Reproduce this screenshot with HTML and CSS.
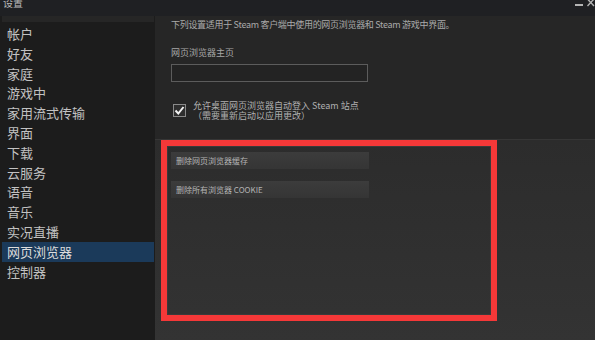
FILE: index.html
```html
<!DOCTYPE html>
<html lang="zh-CN">
<head>
<meta charset="utf-8">
<title>设置</title>
<link rel="stylesheet" href="styles.css">
</head>
<body>
<div class="window">
  <div class="titlebar">
    <span class="title">设置</span>
    <div class="controls">
      <svg class="ctl" width="10" height="8" viewBox="0 0 10 8"><rect x="1" y="4" width="8" height="2" fill="#b4b4b4"/></svg>
      <svg class="ctl" width="8" height="8" viewBox="0 0 8 8"><path d="M0.5 -1 L7 6 M7 -1 L0.5 6" stroke="#b4b4b4" stroke-width="1.4" fill="none"/></svg>
    </div>
  </div>
  <div class="main">
    <nav class="sidebar">
      <div class="strip"></div>
      <ul class="menu">
        <li class="item">帐户</li>
        <li class="item">好友</li>
        <li class="item">家庭</li>
        <li class="item">游戏中</li>
        <li class="item">家用流式传输</li>
        <li class="item">界面</li>
        <li class="item">下载</li>
        <li class="item">云服务</li>
        <li class="item">语音</li>
        <li class="item">音乐</li>
        <li class="item">实况直播</li>
        <li class="item active">网页浏览器</li>
        <li class="item">控制器</li>
      </ul>
    </nav>
    <section class="content">
      <div class="upper">
        <p class="intro">下列设置适用于 Steam 客户端中使用的网页浏览器和 Steam 游戏中界面。</p>
        <label class="field-label">网页浏览器主页</label>
        <div class="input"></div>
        <div class="check-row">
          <span class="checkbox">
            <svg width="11" height="11" viewBox="0 0 11 11"><path d="M1.5 5.5 L4.3 8.5 L9.5 2" stroke="#f2f2f2" stroke-width="2" fill="none"/></svg>
          </span>
          <div class="check-text">
            <div class="line">允许桌面网页浏览器自动登入 Steam 站点</div>
            <div class="line">（需要重新启动以应用更改）</div>
          </div>
        </div>
      </div>
      <div class="lower">
        <div class="highlight-box">
          <div class="btn">删除网页浏览器缓存</div>
          <div class="btn">删除所有浏览器 COOKIE</div>
        </div>
      </div>
    </section>
  </div>
</div>
</body>
</html>
```

FILE: styles.css
```css
* { box-sizing: border-box; }
html, body {
  margin: 0;
  padding: 0;
  width: 595px;
  height: 340px;
  overflow: hidden;
  background: #1c1c1c;
  font-family: "Noto Sans CJK SC", "Noto Sans", "Liberation Sans", sans-serif;
}
.window {
  width: 595px;
  height: 340px;
  display: flex;
  flex-direction: column;
}
.titlebar {
  height: 16px;
  flex: none;
  background: #1f2023;
  display: flex;
  justify-content: space-between;
  align-items: flex-start;
  overflow: hidden;
}
.title {
  font-size: 10px;
  line-height: 10px;
  margin-top: -2px;
  margin-left: 3px;
  color: #b9b9b9;
}
.controls {
  display: flex;
  gap: 3px;
}
.ctl { display: block; }
.main {
  flex: 1;
  display: flex;
  min-height: 0;
}
.sidebar {
  width: 155px;
  flex: none;
  background: #1c1c1c;
  padding-left: 2px;
  padding-right: 1px;
}
.strip {
  height: 6px;
  background: #262626;
  margin-bottom: 2px;
}
.menu {
  list-style: none;
  margin: 0;
  padding: 0;
}
.item {
  height: 19.8px;
  line-height: 19.8px;
  font-size: 13px;
  padding-left: 5px;
  color: #c2c2c2;
  white-space: nowrap;
}
.item.active {
  background: #1b3a5a;
  color: #dcdcdc;
}
.content {
  flex: 1;
  display: flex;
  flex-direction: column;
  background: #262626;
}
.upper {
  height: 124px;
  flex: none;
  padding: 3px 0 0 16px;
  border-bottom: 1px solid #363636;
}
.intro {
  margin: 0;
  font-size: 9px;
  line-height: 12px;
  letter-spacing: -0.3px;
  color: #aaaaaa;
  white-space: nowrap;
}
.field-label {
  display: block;
  margin-top: 16px;
  font-size: 9px;
  line-height: 12px;
  color: #a6a6a6;
}
.input {
  margin-top: 5px;
  width: 197px;
  height: 18px;
  border: 1px solid #5c5c5c;
  background: #232323;
}
.check-row {
  margin-top: 18px;
  display: flex;
  align-items: flex-start;
  gap: 7px;
}
.checkbox {
  margin-left: 2px;
  margin-top: 4px;
  width: 13px;
  height: 13px;
  border: 1px solid #8a8a8a;
  background: #2e2e2e;
  display: flex;
  align-items: center;
  justify-content: center;
}
.checkbox svg { display: block; }
.check-text {
  font-size: 9px;
  color: #b0b0b0;
}
.line {
  height: 10px;
  line-height: 11px;
  white-space: nowrap;
}
.lower {
  flex: 1;
  padding-left: 6px;
  background: linear-gradient(#2c2c2c, #333333);
}
.highlight-box {
  width: 336px;
  height: 181px;
  border: 6px solid #f53838;
  box-shadow: inset 0 0 0 1px #3a3a3a;
  padding: 6px 0 0 4px;
  display: flex;
  flex-direction: column;
  gap: 12px;
}
.btn {
  width: 198px;
  height: 17px;
  background: linear-gradient(#3c3c3c, #353535);
  color: #b4b4b4;
  font-size: 8px;
  line-height: 17px;
  padding-left: 5px;
  white-space: nowrap;
}
```
